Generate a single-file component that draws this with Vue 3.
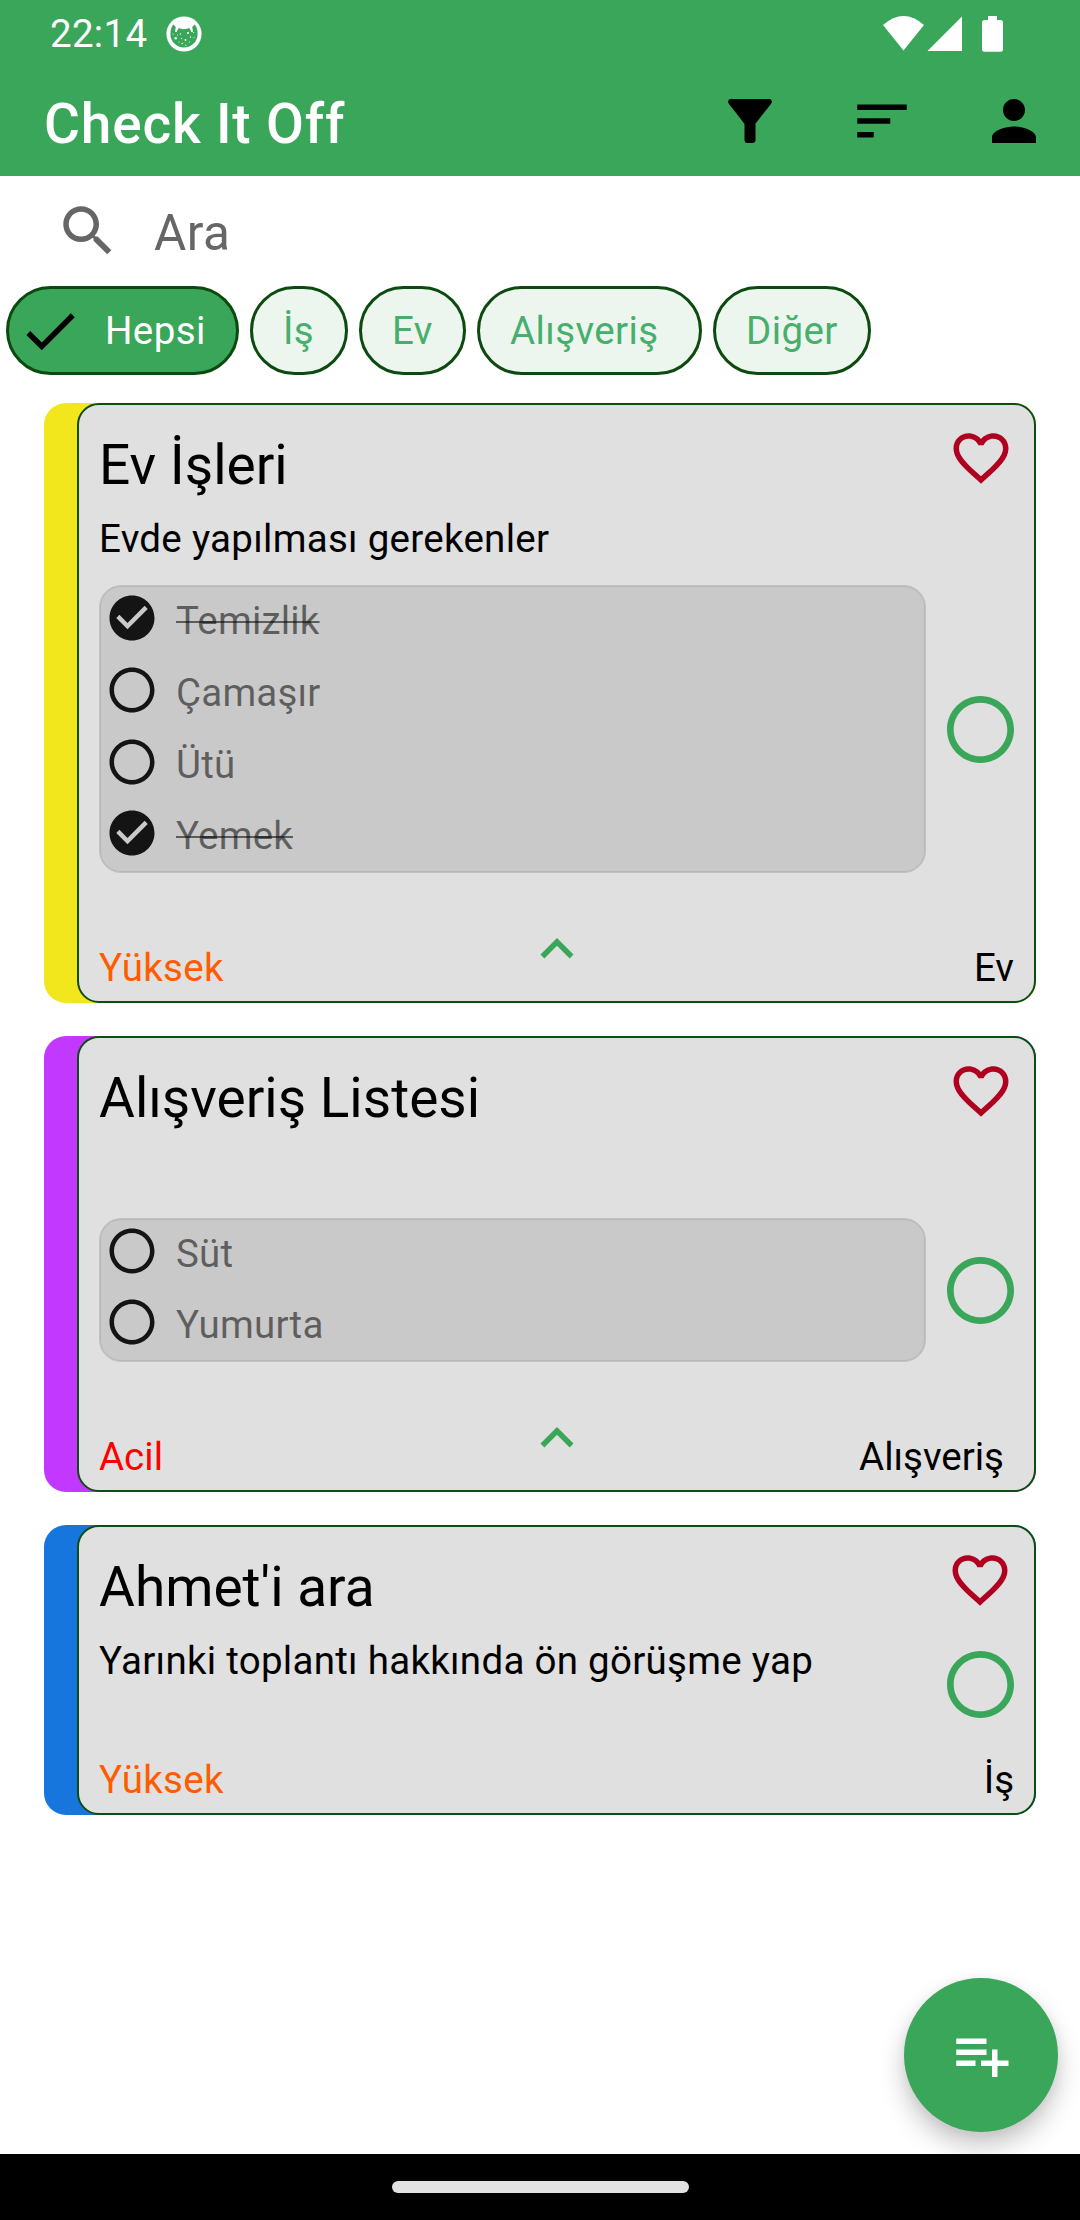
<script setup>
const chips = [
  { label: 'Hepsi', selected: true, size: 'hepsi' },
  { label: 'İş', size: 'is' },
  { label: 'Ev', size: 'ev' },
  { label: 'Alışveriş', size: 'alisveris' },
  { label: 'Diğer', size: 'diger' }
]

const tasks = [
  {
    title: 'Ev İşleri',
    description: 'Evde yapılması gerekenler',
    color: 'yellow',
    items: [
      { text: 'Temizlik', done: true },
      { text: 'Çamaşır', done: false },
      { text: 'Ütü', done: false },
      { text: 'Yemek', done: true }
    ],
    priority: 'Yüksek',
    level: 'high',
    category: 'Ev'
  },
  {
    title: 'Alışveriş Listesi',
    description: '',
    color: 'purple',
    items: [
      { text: 'Süt', done: false },
      { text: 'Yumurta', done: false }
    ],
    priority: 'Acil',
    level: 'urgent',
    category: 'Alışveriş',
    inset: true
  },
  {
    title: "Ahmet'i ara",
    description: 'Yarınki toplantı hakkında ön görüşme yap',
    color: 'blue',
    items: [],
    priority: 'Yüksek',
    level: 'high',
    category: 'İş'
  }
]

const ring = 'M12 2C6.48 2 2 6.48 2 12s4.48 10 10 10 10-4.48 10-10S17.52 2 12 2zm0 18c-4.42 0-8-3.58-8-8s3.58-8 8-8 8 3.58 8 8-3.58 8-8 8z'
const ringChecked = 'M12 2C6.48 2 2 6.48 2 12s4.48 10 10 10 10-4.48 10-10S17.52 2 12 2zm-2 15l-5-5 1.41-1.41L10 14.17l7.59-7.59L19 8l-9 9z'
</script>

<template>
  <div class="screen">
    <header class="top">
      <div class="status">
        <span class="time">22:14</span>
        <svg class="notice" viewBox="0 0 36 36">
          <circle cx="18" cy="18" r="17.6" fill="#fff" />
          <path fill="#39a65a" d="M7.2 8.6 9.8 11 9 15.8l1.8.3 1.3-3.6 1.8-.3c2.600 1.300 5.600 1.300 8.200 0l1.800.300 1.300 3.600 1.800-.300-.8-4.800 2.600-2.400A14.200 14.200 0 0 1 31.600 18a13.600 13.600 0 0 1-27.200 0c0-3.600 1-6.800 2.800-9.400z" />
          <g fill="#fff">
            <circle cx="9.700" cy="22.300" r="1.200" /><circle cx="14.500" cy="18" r=".7" />
            <circle cx="22" cy="17" r="1.100" /><circle cx="19.500" cy="24" r="1" />
            <circle cx="16.300" cy="27.500" r=".7" /><circle cx="13" cy="26" r=".6" />
            <circle cx="24.500" cy="21" r=".7" /><circle cx="27.500" cy="16.500" r=".6" />
            <circle cx="7" cy="18" r=".6" /><circle cx="15.500" cy="22.500" r=".6" />
            <circle cx="23.500" cy="26" r=".6" /><circle cx="28" cy="21.500" r=".5" />
            <circle cx="19.800" cy="29.200" r=".6" /><circle cx="11.500" cy="19" r=".5" />
          </g>
        </svg>
        <svg class="system" viewBox="0 0 120 36">
          <g fill="#fff">
            <path d="M0 9Q20.500-9 41 9L20.500 34.500z" />
            <path d="M44.500 35 79 0.500V35z" />
            <path d="M105 0h9v4h3.500a2.500 2.500 0 0 1 2.500 2.500v26.700a2.500 2.500 0 0 1-2.500 2.500h-16a2.500 2.500 0 0 1-2.500-2.500V6.500A2.500 2.500 0 0 1 101.500 4h3.500z" />
          </g>
        </svg>
      </div>
      <div class="appbar">
        <h1>Check It Off</h1>
        <div class="actions">
          <svg class="icon" viewBox="0 0 24 24"><path d="M4.250 5.610C6.270 8.200 10 13 10 13v6c0 .55.45 1 1 1h2c.55 0 1-.45 1-1v-6s3.720-4.800 5.740-7.390c.51-.66.04-1.610-.79-1.610H5.040c-.83 0-1.300.95-.79 1.610z" /></svg>
          <svg class="icon" viewBox="0 0 24 24"><path d="M3 18h6v-2H3v2zM3 6v2h18V6H3zm0 7h12v-2H3v2z" /></svg>
          <svg class="icon" viewBox="0 0 24 24"><path d="M12 12c2.210 0 4-1.790 4-4s-1.790-4-4-4-4 1.790-4 4 1.790 4 4 4zm0 2c-2.670 0-8 1.340-8 4v2h16v-2c0-2.660-5.330-4-8-4z" /></svg>
        </div>
      </div>
    </header>

    <div class="search">
      <svg class="icon" viewBox="0 0 24 24"><path fill="#666" d="M15.500 14h-.79l-.28-.27C15.410 12.590 16 11.110 16 9.500 16 5.910 13.090 3 9.500 3S3 5.910 3 9.500 5.910 16 9.500 16c1.610 0 3.090-.59 4.230-1.570l.27.28v.79l5 4.990L20.490 19l-4.990-5zm-6 0C7.010 14 5 11.990 5 9.500S7.010 5 9.500 5 14 7.010 14 9.500 11.990 14 9.500 14z" /></svg>
      <span>Ara</span>
    </div>

    <nav class="chips">
      <div v-for="chip in chips" :key="chip.label" class="chip" :class="[chip.size, { selected: chip.selected }]">
        <svg v-if="chip.selected" class="icon" viewBox="0 0 24 24"><path d="M9 16.170L4.830 12l-1.420 1.410L9 19 21 7l-1.410-1.410z" /></svg>
        <span>{{ chip.label }}</span>
      </div>
    </nav>

    <main class="tasks">
      <article v-for="task in tasks" :key="task.title" class="card" :class="task.color">
        <div class="body">
          <div class="head">
            <div class="texts">
              <h2>{{ task.title }}</h2>
              <p>{{ task.description }}</p>
            </div>
            <div class="side">
              <svg class="icon" viewBox="0 0 24 24"><path fill="#b00020" d="M16.500 3c-1.740 0-3.410.81-4.500 2.090C10.910 3.810 9.240 3 7.500 3 4.420 3 2 5.420 2 8.500c0 3.780 3.400 6.860 8.550 11.540L12 21.350l1.450-1.320C18.600 15.360 22 12.280 22 8.500 22 5.420 19.580 3 16.500 3zm-4.400 15.550l-.1.1-.1-.1C7.140 14.240 4 11.390 4 8.500 4 6.500 5.500 5 7.500 5c1.540 0 3.040.99 3.570 2.360h1.870C13.460 5.990 14.960 5 16.500 5c2 0 3.500 1.500 3.500 3.500 0 2.890-3.140 5.740-7.900 10.050z" /></svg>
              <svg v-if="!task.items.length" class="complete" viewBox="2 2 20 20"><path :d="ring" /></svg>
            </div>
          </div>

          <div v-if="task.items.length" class="sub">
            <ul>
              <li v-for="item in task.items" :key="item.text">
                <svg class="tick" viewBox="0 0 24 24"><path :d="item.done ? ringChecked : ring" /></svg>
                <span :class="{ done: item.done }">{{ item.text }}</span>
              </li>
            </ul>
            <svg class="complete" viewBox="2 2 20 20"><path :d="ring" /></svg>
          </div>

          <footer :class="{ compact: !task.items.length }">
            <span class="priority" :class="task.level">{{ task.priority }}</span>
            <svg v-if="task.items.length" class="icon chevron" viewBox="0 0 24 24"><path fill="#39a65a" d="M12 8l-6 6 1.410 1.410L12 10.830l4.590 4.580L18 14z" /></svg>
            <span class="category" :class="{ inset: task.inset }">{{ task.category }}</span>
          </footer>
        </div>
      </article>
    </main>

    <button class="fab">
      <svg class="icon" viewBox="0 0 24 24"><path fill="#fff" d="M14 10H3v2h11v-2zm0-4H3v2h11V6zm4 8v-4h-2v4h-4v2h4v4h2v-4h4v-2h-4zM3 16h7v-2H3v2z" /></svg>
    </button>

    <div class="navbar"><i></i></div>
  </div>
</template>

<style>
html,
body {
  margin: 0;
  background: #fff;
}
</style>

<style scoped>
.screen {
  position: relative;
  display: flex;
  flex-direction: column;
  width: 1080px;
  height: 2220px;
  overflow: hidden;
  background: #fff;
  color: #000;
  font-family: Roboto, "Noto Sans", sans-serif;
  font-size: 38.5px;
  line-height: 46px;
}
h1, h2, p, ul {
  margin: 0;
  padding: 0;
}
svg {
  display: block;
  flex: none;
}
.icon {
  width: 66px;
  height: 66px;
}
.top {
  height: 176px;
  background: #39a65a;
  color: #fff;
}
.status {
  display: flex;
  align-items: center;
  height: 67px;
  padding: 0 77px 0 50px;
}
.time {
  width: 116px;
  letter-spacing: 0.3px;
}
.notice {
  width: 36px;
  height: 36px;
}
.system {
  width: 120px;
  height: 36px;
  margin-left: auto;
}
.appbar {
  display: flex;
  align-items: center;
  justify-content: space-between;
  height: 108px;
  padding: 0 33px 0 44px;
}
h1 {
  font-size: 55px;
  font-weight: 500;
  line-height: 64px;
  padding-top: 5px;
  letter-spacing: 0.83px;
}
.actions {
  display: flex;
  gap: 66px;
}
.search {
  display: flex;
  align-items: center;
  height: 110px;
  padding-left: 55px;
  box-sizing: border-box;
  font-size: 49.5px;
  line-height: 58px;
  letter-spacing: 0.4px;
  color: #666;
}
.search span {
  margin: 3px 0 0 33px;
}
.chips {
  display: flex;
  gap: 11px;
  height: 89px;
  padding-left: 6px;
}
.chip {
  display: flex;
  align-items: center;
  box-sizing: border-box;
  height: 89px;
  padding-left: 30px;
  border: 3px solid #0c4a10;
  border-radius: 45px;
  background: #ecf6ef;
  color: #48ae6b;
  letter-spacing: 0.4px;
}
.chip.selected {
  padding-left: 8px;
  gap: 22px;
  background: #39a65a;
  color: #fff;
}
.hepsi { width: 233px; }
.is { width: 98px; }
.ev { width: 107px; }
.alisveris { width: 225px; }
.diger { width: 158px; }
.tasks {
  display: flex;
  flex-direction: column;
  gap: 33px;
  padding: 28px 44px 0;
}
.card {
  padding-left: 33px;
  border-radius: 22px;
}
.yellow { background: #f2e61d; }
.purple { background: #c238ff; }
.blue { background: #1676dd; }
.body {
  border: 2px solid #0d4d12;
  border-radius: 22px;
  background: #e0e0e0;
  padding: 20px 20px 10px;
}
.head {
  display: flex;
  justify-content: space-between;
}
.texts {
  padding-top: 8px;
}
h2 {
  font-size: 55px;
  font-weight: 400;
  line-height: 64px;
}
p {
  height: 46px;
  margin-top: 19px;
  letter-spacing: 0.28px;
}
.side {
  display: flex;
  flex-direction: column;
  gap: 38px;
}
.complete {
  width: 67px;
  height: 67px;
  fill: #39a65a;
}
.sub {
  display: flex;
  align-items: center;
  justify-content: space-between;
  margin-top: 23px;
}
ul {
  box-sizing: border-box;
  width: 827px;
  border: 1px solid #c2c2c2;
  border-radius: 22px;
  background: #c9c9c9;
  box-shadow: inset 0 0 0 1px #b7b7b7;
  padding: 0 5px;
  list-style: none;
}
li {
  display: flex;
  align-items: center;
  height: 72px;
  color: rgba(0, 0, 0, 0.54);
  letter-spacing: 0.2px;
}
li:first-child,
li:last-child {
  height: 71px;
}
.tick {
  width: 54px;
  height: 54px;
  margin-bottom: 7px;
  fill: #141414;
}
li span {
  margin: -1px 0 0 17px;
}
.done {
  text-decoration: line-through;
  text-decoration-thickness: 2px;
}
footer {
  display: grid;
  grid-template-columns: 1fr auto 1fr;
  align-items: start;
  margin-top: 72px;
  height: 46px;
}
footer.compact {
  margin-top: 39px;
}
.priority {
  grid-column: 1;
}
.high {
  color: #ff5c00;
  letter-spacing: 0.3px;
}
.urgent { color: #f00; }
.chevron {
  grid-column: 2;
  margin-top: -29px;
}
.category {
  grid-column: 3;
  text-align: right;
}
.category.inset {
  padding-right: 10px;
}
.fab {
  position: absolute;
  right: 22px;
  bottom: 88px;
  display: flex;
  align-items: center;
  justify-content: center;
  width: 154px;
  height: 154px;
  padding: 0;
  border: 0;
  border-radius: 50%;
  background: #39a65a;
  box-shadow: 0 14px 26px rgba(0, 0, 0, 0.22), 0 2px 12px rgba(0, 0, 0, 0.06);
}
.navbar {
  position: relative;
  display: flex;
  align-items: center;
  justify-content: center;
  height: 66px;
  margin-top: auto;
  background: #000;
}
.navbar i {
  width: 297px;
  height: 12px;
  border-radius: 6px;
  background: #e2e2e2;
}
</style>
